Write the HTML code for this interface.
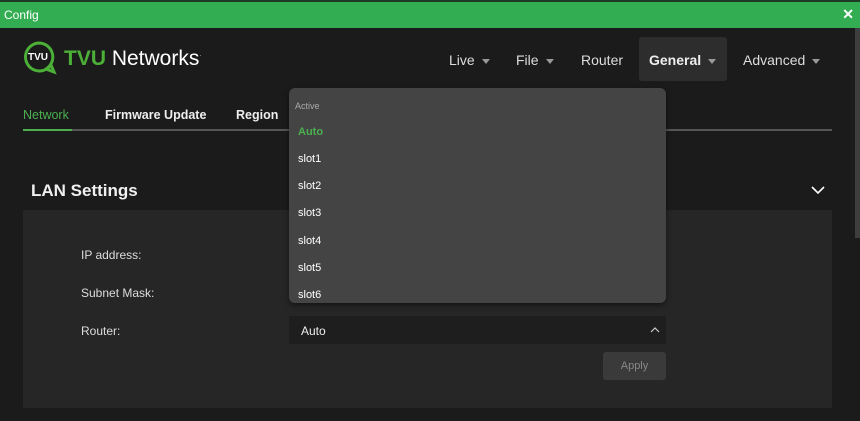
<!DOCTYPE html>
<html><head><meta charset="utf-8"><style>
*{margin:0;padding:0;box-sizing:border-box}
body{width:860px;height:421px;overflow:hidden;background:#1b1b1b;font-family:"Liberation Sans",sans-serif;position:relative;color:#e6e6e6}
.abs{position:absolute}
.title{left:0;top:0;width:860px;height:28px;background:#33ad51;border-top:2px solid #1e3a25}
.title span{position:absolute;left:4px;top:6px;font-size:12px;color:#fff}
.title b{position:absolute;right:6px;top:4px;color:#fff;font-size:14px}
.nav{font-size:14px;color:#ddd;top:52px}
.tri{display:inline-block;width:0;height:0;border-left:4px solid transparent;border-right:4px solid transparent;border-top:5px solid #999;margin-left:7px;vertical-align:middle}
.tab{top:108px;font-size:12.5px;font-weight:bold;color:#eee}
.dd{left:289px;top:88px;width:377px;height:215px;background:#444;border-radius:6px;box-shadow:0 2px 6px rgba(0,0,0,.5)}
.dd div{position:absolute;left:9px;font-size:11px;color:#fff}
.lbl{font-size:12px;color:#ddd;left:81px}
</style></head><body>
<div class="abs title"><span>Config</span><b>✕</b></div>
<svg class="abs" style="left:22px;top:40px" width="36" height="36" viewBox="0 0 36 36"><path d="M17 3a14 14 0 1 0 12 22l3 7-8-3A14 14 0 0 0 17 3z" fill="none" stroke="#4caf37" stroke-width="3"/><text x="6" y="20" font-size="10" font-weight="bold" fill="#fff" font-family="Liberation Sans">TVU</text></svg>
<div class="abs" style="left:64px;top:47px;font-size:21px;color:#fff"><b style="color:#4caf37">TVU</b> Networks<sup style="font-size:6px">·</sup></div>
<div class="abs nav" style="left:449px">Live<span class="tri"></span></div>
<div class="abs nav" style="left:516px">File<span class="tri"></span></div>
<div class="abs nav" style="left:581px">Router</div>
<div class="abs" style="left:639px;top:37px;width:88px;height:44px;background:#2d2d2d;border-radius:3px"></div>
<div class="abs nav" style="left:649px;font-weight:bold;color:#eee">General<span class="tri"></span></div>
<div class="abs nav" style="left:743px">Advanced<span class="tri"></span></div>
<div class="abs tab" style="left:23px;color:#4caf50;font-weight:normal">Network</div>
<div class="abs tab" style="left:105px">Firmware Update</div>
<div class="abs tab" style="left:236px">Region</div>
<div class="abs" style="left:23px;top:129px;width:809px;height:2px;background:#555"></div>
<div class="abs" style="left:23px;top:129px;width:49px;height:2px;background:#4caf50"></div>
<div class="abs" style="left:31px;top:181px;font-size:17px;font-weight:bold;color:#f0f0f0">LAN Settings</div>
<svg class="abs" style="left:810px;top:185px" width="16" height="10"><path d="M2 2l6 6 6-6" stroke="#fff" stroke-width="1.6" fill="none"/></svg>
<div class="abs" style="left:23px;top:210px;width:809px;height:198px;background:#262626"></div>
<div class="abs lbl" style="top:248px">IP address:</div>
<div class="abs lbl" style="top:286px">Subnet Mask:</div>
<div class="abs lbl" style="top:324px">Router:</div>
<div class="abs" style="left:289px;top:316px;width:377px;height:28px;background:#1e1e1e"></div>
<div class="abs" style="left:301px;top:324px;font-size:12px;color:#eee">Auto</div>
<svg class="abs" style="left:650px;top:326px" width="10" height="7"><path d="M1 6l4-4 4 4" stroke="#ccc" stroke-width="1.2" fill="none"/></svg>
<div class="abs" style="left:603px;top:352px;width:63px;height:28px;background:#3a3a3a;border-radius:3px;color:#888;font-size:11px;text-align:center;line-height:28px">Apply</div>
<div class="abs" style="left:855px;top:28px;width:5px;height:210px;background:#3e3e3e"></div>
<div class="abs dd">
<div style="top:13px;font-size:9px;color:#aaa;left:6px">Active</div>
<div style="top:38px;color:#4caf50;font-weight:bold">Auto</div>
<div style="top:65px">slot1</div>
<div style="top:92px">slot2</div>
<div style="top:119px">slot3</div>
<div style="top:147px">slot4</div>
<div style="top:174px">slot5</div>
<div style="top:201px">slot6</div>
</div>
</body></html>
